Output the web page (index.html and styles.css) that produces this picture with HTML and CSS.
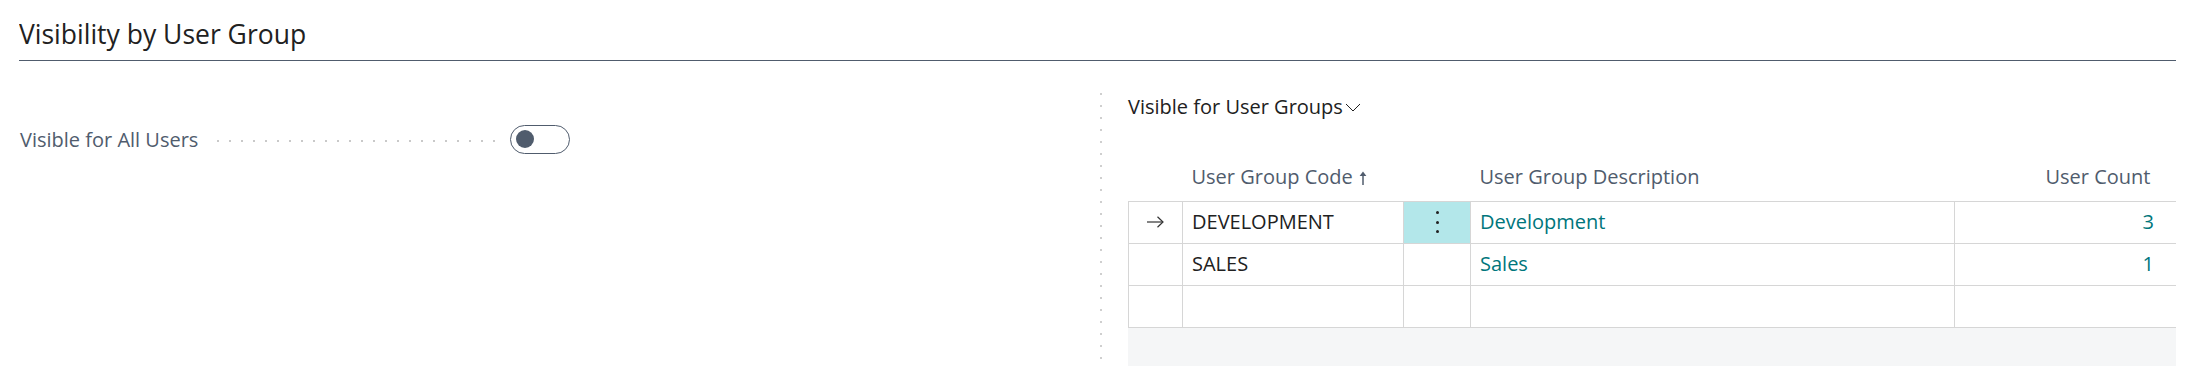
FILE: index.html
```html
<!DOCTYPE html>
<html lang="en">
<head>
    <meta charset="UTF-8">
    <meta name="viewport" content="width=device-width, initial-scale=1.0">
    <title>Visibility by User Group</title>
    <link rel="stylesheet" href="styles.css">
</head>
<body>
    <div class="page">
        <h2 class="group-title">Visibility by User Group</h2>

        <div class="columns">
            <div class="col col-left">
                <div class="field">
                    <span class="field-label">Visible for All Users</span>
                    <span class="leader"></span>
                    <span class="toggle"><span class="knob"></span></span>
                </div>
            </div>

            <div class="col col-right">
                <div class="part-title">
                    Visible for User Groups
                    <svg class="chevron" width="16" height="9" viewBox="0 0 16 9">
                        <polyline points="1,1 8,8 15,1" fill="none" stroke="#212121" stroke-width="1"/>
                    </svg>
                </div>

                <table class="grid">
                    <colgroup>
                        <col class="c-arrow">
                        <col class="c-code">
                        <col class="c-menu">
                        <col class="c-desc">
                        <col class="c-count">
                    </colgroup>
                    <thead>
                        <tr>
                            <th></th>
                            <th>User Group Code
                                <svg class="sort" width="8" height="14" viewBox="0 0 8 14">
                                    <line x1="4" y1="3" x2="4" y2="14" stroke="#505c6d" stroke-width="1.5"/>
                                    <polygon points="4,0.5 7.4,5 0.6,5" fill="#505c6d"/>
                                </svg>
                            </th>
                            <th></th>
                            <th>User Group Description</th>
                            <th class="num">User Count</th>
                        </tr>
                    </thead>
                    <tbody>
                        <tr>
                            <td class="marker">
                                <svg width="18" height="12" viewBox="0 0 18 12">
                                    <line x1="1" y1="6" x2="17" y2="6" stroke="#333" stroke-width="1.2"/>
                                    <polyline points="11.5,0.8 17,6 11.5,11.2" fill="none" stroke="#333" stroke-width="1.2"/>
                                </svg>
                            </td>
                            <td>DEVELOPMENT</td>
                            <td class="menu active"><span class="dots"><i></i><i></i><i></i></span></td>
                            <td class="link">Development</td>
                            <td class="num link">3</td>
                        </tr>
                        <tr>
                            <td class="marker"></td>
                            <td>SALES</td>
                            <td class="menu"></td>
                            <td class="link">Sales</td>
                            <td class="num link">1</td>
                        </tr>
                        <tr>
                            <td class="marker"></td>
                            <td></td>
                            <td class="menu"></td>
                            <td></td>
                            <td class="num"></td>
                        </tr>
                    </tbody>
                </table>
                <div class="grid-footer"></div>
            </div>
        </div>
    </div>
</body>
</html>
```

FILE: styles.css
```css
body {
    font-family: "Open Sans", "Noto Sans", Arial, sans-serif;
    background: #ffffff;
    color: #212121;
    margin: 0;
    padding: 0;
}

.page {
    width: 2157px;
    margin-left: 19px;
    overflow: hidden;
    height: 366px;
}

.group-title {
    margin: 0;
    padding-top: 16px;
    padding-bottom: 8px;
    font-size: 26.5px;
    line-height: 36px;
    font-weight: 400;
    color: #212121;
    border-bottom: 1px solid #505c6d;
}

.columns {
    display: grid;
    grid-template-columns: 1081px 1fr;
    margin-top: 32px;
}

/* left column: toggle field */

.field {
    display: flex;
    align-items: center;
    height: 30px;
    margin-top: 31px;
    width: 551px;
}

.field-label {
    font-size: 20px;
    color: #505c6d;
    white-space: nowrap;
    padding-left: 1px;
}

.leader {
    flex: 1;
    height: 2px;
    margin: 4px 10px 0 14px;
    background-image: radial-gradient(circle, #c9c9c9 1px, transparent 1.2px);
    background-size: 12px 2px;
    background-repeat: repeat-x;
}

.toggle {
    box-sizing: border-box;
    display: flex;
    align-items: center;
    width: 60px;
    height: 29px;
    padding-left: 4.5px;
    border: 1.5px solid #505c6d;
    border-radius: 15px;
}

.knob {
    width: 18px;
    height: 18px;
    border-radius: 50%;
    background: #505c6d;
}

/* right column: user group list part */

.col-right {
    padding-left: 28px;
    background-image: linear-gradient(to bottom, #cfcfcf 2px, transparent 2px);
    background-size: 2px 12px;
    background-repeat: repeat-y;
    background-position: 0 0;
}

.part-title {
    font-size: 20px;
    line-height: 28px;
    color: #212121;
    display: flex;
    align-items: center;
    gap: 2px;
}

.chevron {
    margin-top: 1px;
}

.grid {
    width: 1048px;
    margin-top: 40px;
    border-collapse: collapse;
    table-layout: fixed;
    font-size: 20px;
}

.c-arrow { width: 54px; }
.c-code { width: 221px; }
.c-menu { width: 67px; }
.c-desc { width: 484px; }
.c-count { width: 222px; }

.grid th {
    box-sizing: border-box;
    height: 40px;
    padding: 0 10px 10px 9px;
    vertical-align: bottom;
    text-align: left;
    font-weight: 400;
    color: #505c6d;
    line-height: 28px;
    white-space: nowrap;
}

.grid th .sort {
    margin-left: 1px;
    vertical-align: -1px;
}

.grid tbody tr {
    height: 42px;
}

.grid td {
    padding: 0 10px 0 9px;
    border: 1px solid #d6d6d6;
    color: #212121;
    line-height: 28px;
    white-space: nowrap;
}

.grid .num {
    text-align: right;
    padding-right: 22px;
}

.grid th.num {
    padding-right: 26px;
}

.grid td.marker {
    padding: 0;
    text-align: center;
}

.grid td.marker svg {
    display: block;
    margin: 0 auto;
    position: relative;
    left: -1px;
}

.grid td.menu {
    padding: 0;
}

.grid td.active {
    background: #b3e7ea;
}

.dots {
    display: flex;
    flex-direction: column;
    align-items: center;
    gap: 6.3px;
}

.dots i {
    display: block;
    width: 3px;
    height: 3px;
    border-radius: 50%;
    background: #212121;
}

.grid td.link {
    color: #00767c;
}

.grid-footer {
    width: 1048px;
    height: 60px;
    background: #f5f6f7;
}
```
